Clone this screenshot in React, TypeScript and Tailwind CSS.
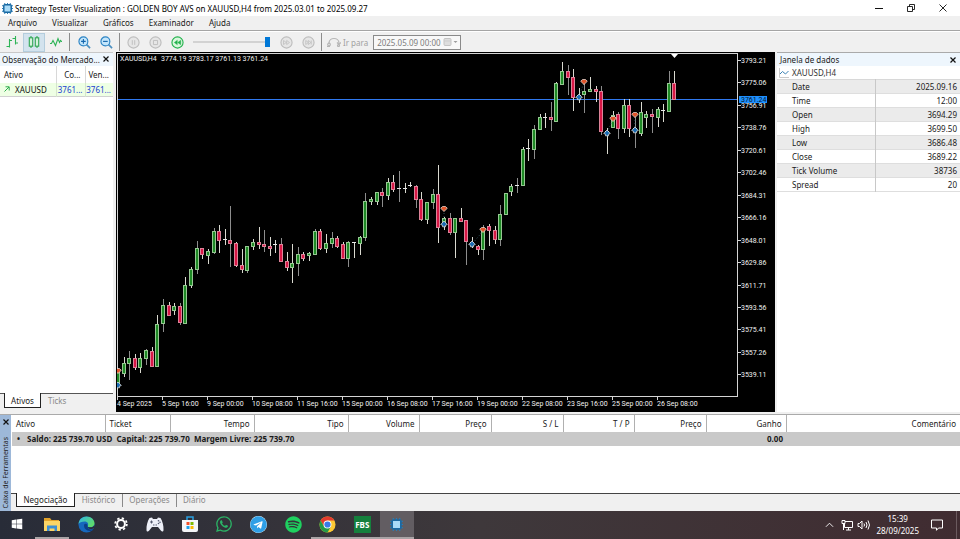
import type { ReactNode } from 'react';
import { FaSpotify, FaTelegram, FaWhatsapp, FaWindows } from 'react-icons/fa';

type Kind = 'up' | 'down' | 'doji';
// high, top of body, bottom of body, low
type Candle = [Kind, number, number, number, number];

const candles: Candle[] = [
  ['up', 370, 372, 385, 386], ['up', 357, 363, 373, 377], ['up', 351, 358, 363, 380],
  ['down', 354, 358, 367, 370], ['up', 353, 358, 367, 373], ['up', 349, 350, 358, 365],
  ['down', 347, 351, 366, 367], ['up', 315, 324, 366, 367], ['up', 299, 305, 323, 332],
  ['down', 302, 305, 315, 316], ['up', 303, 306, 310, 315], ['down', 303, 306, 322, 325],
  ['up', 277, 285, 323, 323], ['up', 267, 269, 285, 288], ['up', 241, 248, 269, 274],
  ['down', 248, 248, 254, 259], ['up', 249, 251, 255, 264], ['up', 228, 231, 252, 254],
  ['down', 225, 231, 240, 253], ['doji', 229, 239, 240, 245], ['down', 206, 240, 243, 267],
  ['down', 242, 243, 265, 267], ['down', 249, 265, 269, 273], ['up', 246, 246, 270, 273],
  ['up', 239, 242, 246, 250], ['down', 227, 242, 244, 249], ['down', 230, 244, 246, 252],
  ['down', 237, 246, 248, 256], ['doji', 240, 244, 245, 253], ['down', 238, 244, 261, 262],
  ['down', 252, 261, 267, 271], ['up', 244, 263, 267, 283], ['up', 247, 254, 263, 276],
  ['down', 252, 254, 258, 261], ['up', 252, 253, 255, 261], ['up', 229, 231, 254, 254],
  ['down', 229, 231, 248, 250], ['up', 234, 243, 248, 253], ['up', 232, 238, 243, 248],
  ['down', 236, 238, 246, 248], ['down', 242, 244, 258, 259], ['up', 241, 242, 258, 267],
  ['doji', 242, 242, 243, 258], ['up', 236, 237, 243, 255], ['up', 193, 201, 237, 241],
  ['up', 197, 199, 201, 205], ['up', 192, 192, 201, 205], ['down', 188, 192, 195, 207],
  ['up', 178, 182, 195, 200], ['down', 175, 182, 189, 192], ['doji', 171, 188, 189, 202],
  ['doji', 183, 188, 189, 193], ['doji', 182, 185, 186, 187], ['down', 185, 186, 199, 208],
  ['down', 192, 199, 219, 221], ['up', 202, 202, 219, 224], ['up', 189, 194, 202, 209],
  ['down', 165, 194, 227, 243], ['up', 217, 218, 222, 230], ['down', 213, 218, 232, 235],
  ['up', 218, 218, 232, 258], ['down', 208, 218, 221, 221], ['down', 220, 220, 241, 265],
  ['doji', 237, 242, 243, 248], ['down', 245, 246, 249, 255], ['up', 225, 228, 249, 260],
  ['down', 224, 226, 230, 246], ['down', 226, 230, 239, 244], ['up', 205, 214, 239, 246],
  ['up', 193, 193, 214, 215], ['up', 184, 186, 191, 196], ['doji', 178, 185, 186, 193],
  ['up', 147, 149, 185, 186], ['doji', 139, 148, 150, 161], ['up', 125, 129, 149, 159],
  ['up', 114, 117, 129, 130], ['doji', 113, 117, 118, 128], ['down', 102, 117, 119, 131],
  ['up', 82, 83, 121, 122], ['up', 62, 71, 84, 84], ['down', 65, 71, 77, 95],
  ['down', 69, 77, 97, 111], ['doji', 88, 95, 96, 103], ['up', 83, 91, 94, 113],
  ['up', 77, 89, 91, 92], ['down', 86, 89, 91, 102], ['down', 86, 91, 131, 135],
  ['doji', 128, 131, 132, 154], ['up', 111, 115, 127, 128], ['down', 112, 114, 128, 139],
  ['up', 99, 105, 128, 133], ['down', 99, 105, 128, 137], ['doji', 113, 128, 129, 148],
  ['up', 102, 112, 133, 136], ['up', 111, 114, 117, 128], ['down', 109, 114, 116, 133],
  ['up', 107, 109, 117, 127], ['doji', 104, 110, 111, 122], ['up', 71, 83, 111, 112],
  ['down', 71, 83, 99, 99],
];

const markers = [
  { index: 0, y: 371, side: 'sell' },
  { index: 0, y: 385, side: 'buy' },
  { index: 58, y: 209, side: 'sell' },
  { index: 58, y: 224, side: 'buy' },
  { index: 63, y: 244, side: 'buy' },
  { index: 65, y: 230, side: 'sell' },
  { index: 82, y: 97, side: 'buy' },
  { index: 83, y: 82, side: 'sell' },
  { index: 87, y: 133, side: 'buy' },
  { index: 88, y: 119, side: 'sell' },
  { index: 92, y: 115, side: 'sell' },
  { index: 92, y: 130, side: 'buy' },
];

const prices = [
  '3793.21', '3775.06', '3756.91', '3738.76', '3720.61', '3702.46', '3684.31', '3666.16',
  '3648.01', '3629.86', '3611.71', '3593.56', '3575.41', '3557.26', '3539.11',
];

const times = [
  '4 Sep 2025', '5 Sep 16:00', '9 Sep 00:00', '10 Sep 08:00', '11 Sep 16:00', '15 Sep 00:00',
  '16 Sep 08:00', '17 Sep 16:00', '19 Sep 00:00', '22 Sep 08:00', '23 Sep 16:00',
  '25 Sep 00:00', '26 Sep 08:00',
];

const dataRows = [
  ['Date', '2025.09.16'],
  ['Time', '12:00'],
  ['Open', '3694.29'],
  ['High', '3699.50'],
  ['Low', '3686.48'],
  ['Close', '3689.22'],
  ['Tick Volume', '38736'],
  ['Spread', '20'],
];

const tradeColumns = [
  { name: 'Ativo', width: 'w-[93px]' },
  { name: 'Ticket', width: 'w-[65px]' },
  { name: 'Tempo', width: 'w-[84px]' },
  { name: 'Tipo', width: 'w-[94px]' },
  { name: 'Volume', width: 'w-[71px]' },
  { name: 'Preço', width: 'w-[72px]' },
  { name: 'S / L', width: 'w-[72px]' },
  { name: 'T / P', width: 'w-[71px]' },
  { name: 'Preço', width: 'w-[72px]' },
  { name: 'Ganho', width: 'w-[80px]' },
  { name: 'Comentário', width: '' },
];

const candleX = (i: number) => 117 + Math.round(i * 5.62);

function AppLogo({ className }: { className?: string }) {
  return (
    <svg viewBox="0 0 16 16" className={className}>
      <path d="M4 0v16M8 0v16M12 0v16M0 4h16M0 8h16M0 12h16" stroke="#2b7db5" strokeWidth="1.4" />
      <rect x="1.500" y="1.500" width="13" height="13" rx="3" fill="#1b6aa3" />
      <rect x="3.700" y="3.700" width="8.600" height="8.600" fill="#a9dbf8" />
    </svg>
  );
}

function CloseIcon() {
  return (
    <svg viewBox="0 0 6 6" className="w-[6px] h-[6px]">
      <path d="M.5.5l5 5M5.500.5l-5 5" stroke="#111" strokeWidth="1.2" />
    </svg>
  );
}

function Chart() {
  return (
    <svg
      viewBox="116 52 659 359"
      preserveAspectRatio="xMinYMin meet"
      className="block w-full h-full font-['Roboto',sans-serif] text-[7px]"
      role="img"
      aria-label="XAUUSD,H4"
    >
      <rect x="117.5" y="53.5" width="620" height="343" fill="none" stroke="#d4d4d4" />
      <path d="M118 99.500H737" stroke="#2f78ee" />
      <path d="M671 54h7l-3.500 4z" fill="#fff" />
      <text x="120" y="61" fill="#f2f2f2">XAUUSD,H4</text>
      <text x="161" y="61" fill="#f2f2f2">3774.19 3783.17 3761.13 3761.24</text>

      {candles.map(([kind, high, top, bottom, low], i) => {
        const x = candleX(i);
        return (
          <g key={i}>
            <path d={`M${x + 1.5} ${high}V${low}`} stroke={i % 3 === 2 ? '#8d8d8d' : '#d9d9d0'} />
            {kind === 'doji' ? (
              <path d={`M${x - 1} ${top + 0.5}h4`} stroke="#e8e8e8" />
            ) : (
              <rect
                x={x - 0.5}
                y={top + 0.5}
                width="3"
                height={Math.max(bottom - top, 2)}
                fill={kind === 'up' ? '#1f8a26' : '#d81846'}
                stroke={kind === 'up' ? '#96c792' : '#dd8399'}
              />
            )}
          </g>
        );
      })}

      <path
        d="M473 243l10-12M579 96l5-13M607 132l6-12M635 130v-14M444 223v-13"
        stroke="#3f7a86"
        strokeWidth="0.7"
        strokeDasharray="1 2"
      />
      {markers.map((m, i) => (
        <path
          key={i}
          transform={`translate(${candleX(m.index) + 1} ${m.y})`}
          d={
            m.side === 'sell'
              ? 'M-1.500-2.500h3l1.800 1.800-3.300 3.200-3.300-3.200z'
              : 'M-1.500 2.800h3v-1.500l1.800-.8-3.300-3.500-3.300 3.500 1.800.8z'
          }
          fill={m.side === 'sell' ? '#e0552b' : '#1b6db3'}
          stroke="#f0ebe4"
          strokeWidth="0.7"
        />
      ))}
      <path d="M116 366h1v23h-1z" fill="#000" />

      {prices.map((p, i) => {
        const y = Math.round(60 + i * 22.45);
        return (
          <g key={p}>
            <path d={`M738 ${y + 0.5}h3`} stroke="#d4d4d4" />
            <text x="741" y={y + 3} fill="#f2f2f2">{p}</text>
          </g>
        );
      })}
      <rect x="739" y="96" width="28" height="7" fill="#1e90ff" />
      <text x="741" y="102" fill="#04152b">3761.24</text>

      {times.map((t, i) => (
        <g key={t}>
          <path d={`M${117.5 + i * 45} 397v3`} stroke="#d4d4d4" />
          <text x={117 + i * 45} y="406" fill="#f2f2f2">{t}</text>
        </g>
      ))}
    </svg>
  );
}

function RoundIcon({ children, active }: { children: ReactNode; active?: boolean }) {
  return (
    <svg
      viewBox="0 0 14 14"
      className={`w-[13px] h-[13px] ${active ? 'text-[#22b14c]' : 'text-[#bdbdbd]'}`}
      fill="none"
      stroke="currentColor"
    >
      <circle cx="7" cy="7" r="6" fill={active ? '#d9f7dd' : '#e6e6e6'} strokeWidth="1.2" />
      {children}
    </svg>
  );
}

function ToolButton({ label, children, on }: { label: string; children: ReactNode; on?: boolean }) {
  return (
    <button
      aria-label={label}
      className={`flex items-center justify-center w-[22px] h-[19px] ${on ? 'bg-[#d3e3ee] outline outline-[#b4cddd] -outline-offset-1' : ''}`}
    >
      {children}
    </button>
  );
}

function ZoomGlyph({ plus }: { plus?: boolean }) {
  return (
    <svg viewBox="0 0 14 14" className="w-[13px] h-[13px]" fill="none">
      <path d="M9 9l4 4" stroke="#4b8fc0" strokeWidth="1.800" />
      <circle cx="5.800" cy="5.800" r="4.800" fill="#c4e6fb" stroke="#2a83c4" strokeWidth="1.200" />
      <path d={plus ? 'M3.300 5.800h5M5.800 3.300v5' : 'M3.300 5.800h5'} stroke="#1566ad" strokeWidth="1.200" />
    </svg>
  );
}

function Toolbar() {
  return (
    <div className="flex items-center h-[20px] shrink-0 pl-[1px] bg-[#f0f0f0] text-[#a0a0a0]">
      <ToolButton label="Barras">
        <svg viewBox="0 0 12 12" className="w-[12px] h-[12px]" fill="none" stroke="#2fb457" strokeWidth="1.100">
          <path d="M3.500 3v8.500M3.500 4.500h2.500M.5 10.500h3M9.500 0v8.500M6.500 2.500h3M9.500 7h2.500" />
        </svg>
      </ToolButton>
      <ToolButton label="Velas" on>
        <svg viewBox="0 0 12 12" className="w-[12px] h-[12px]" fill="#d5f2dc" stroke="#2fa653" strokeWidth="1.100">
          <path d="M3 0v12M9 0v12" />
          <rect x="1.300" y="1.800" width="3.400" height="8.400" />
          <rect x="7.300" y="1.800" width="3.400" height="8.400" />
        </svg>
      </ToolButton>
      <ToolButton label="Linha">
        <svg viewBox="0 0 12 12" className="w-[12px] h-[12px]" fill="none" stroke="#2fb457" strokeWidth="1.100">
          <path d="M0 7.500h1.500l1.500-3 2.500 5 2.500-7 1.500 4 1-2 1 1h.5" />
        </svg>
      </ToolButton>
      <div className="w-px h-[18px] ml-[2px] mr-[3px] bg-[#8c8c8c]" />
      <ToolButton label="Aumentar zoom">
        <ZoomGlyph plus />
      </ToolButton>
      <ToolButton label="Diminuir zoom">
        <ZoomGlyph />
      </ToolButton>
      <div className="w-px h-[18px] mx-[2px] bg-[#8c8c8c]" />
      <ToolButton label="Pausar">
        <RoundIcon><path d="M5.700 4.500v5M8.300 4.500v5" /></RoundIcon>
      </ToolButton>
      <ToolButton label="Parar">
        <RoundIcon><path d="M4.800 4.800h4.400v4.400H4.800z" /></RoundIcon>
      </ToolButton>
      <ToolButton label="Mais lento">
        <RoundIcon active>
          <path d="M6.800 4.500v5L3.500 7zM10.500 4.500v5L7.200 7z" fill="currentColor" strokeWidth=".4" />
        </RoundIcon>
      </ToolButton>
      <input
        type="range"
        aria-label="Velocidade"
        defaultValue={100}
        className="w-[77px] h-[12px] mx-[5px] appearance-none bg-transparent [&::-webkit-slider-runnable-track]:h-[2px] [&::-webkit-slider-runnable-track]:bg-[#d2d2d2] [&::-webkit-slider-thumb]:appearance-none [&::-webkit-slider-thumb]:w-[5px] [&::-webkit-slider-thumb]:h-[10px] [&::-webkit-slider-thumb]:-mt-[4px] [&::-webkit-slider-thumb]:bg-[#0078d7]"
      />
      <ToolButton label="Mais rápido">
        <RoundIcon><path d="M3.800 4.800v4.400L6.800 7zM7.200 4.800v4.400l3-2.200z" strokeWidth=".8" /></RoundIcon>
      </ToolButton>
      <ToolButton label="Ir ao fim">
        <RoundIcon><path d="M4 4.800v4.400L6.800 7zM6.800 4.800v4.400L9.600 7zM10 4.800v4.400" strokeWidth=".8" /></RoundIcon>
      </ToolButton>
      <div className="w-px h-[18px] ml-[2px] mr-[5px] bg-[#8c8c8c]" />
      <button className="flex items-center gap-[2px]">
        <svg viewBox="0 0 14 10" className="w-[14px] h-[10px]" fill="none" stroke="#b5b5b5" strokeWidth="1.200">
          <path d="M2 6C2 0 12 0 12 6" />
          <path d="M0 9.500h3M10 5.500l2 2 2-2" />
          <circle cx="2" cy="7.500" r="1.300" />
          <circle cx="11.500" cy="8.500" r="1" />
        </svg>
        Ir para
      </button>
      <div className="flex items-center w-[88px] h-[15px] ml-[5px] pl-[3px] border border-[#8a8a8a] bg-[#f8f8f8]">
        <input
          aria-label="Ir para"
          defaultValue="2025.05.09 00:00"
          className="w-[66px] bg-transparent text-[#7d7d7d] outline-none"
        />
        <svg viewBox="0 0 16 8" className="w-[16px] h-[8px]" fill="none">
          <rect x="1" y=".5" width="7" height="7" rx="1" fill="#dedede" stroke="#c4c4c4" />
          <path d="M1 3h7" stroke="#cdcdcd" />
          <path d="M10.500 3h4l-2 2z" fill="#9c9c9c" />
        </svg>
      </div>
    </div>
  );
}

function MarketWatch() {
  return (
    <aside className="flex flex-col w-[113px] shrink-0 bg-[#f0f0f0]">
      <div className="flex items-center justify-between h-[14px] pl-[2px] pr-[4px] pb-[1px] bg-[#eef6fd] border-t border-[#c8c8c8]">
        <span>Observação do Mercado...</span>
        <button aria-label="Fechar"><CloseIcon /></button>
      </div>
      <div className="flex-1 bg-white border-b border-[#555]">
        <table className="w-full table-fixed border-b border-[#d0d0d0]">
          <thead>
            <tr className="h-[17px] text-right">
              <th className="w-[56px] pl-[4px] text-left font-normal border-r border-[#d8d8d8]">Ativo</th>
              <th className="w-[29px] pr-[4px] font-normal border-r border-[#d8d8d8]">Co...</th>
              <th className="pr-[4px] font-normal">Ven...</th>
            </tr>
          </thead>
          <tbody>
            <tr className="h-[13px] bg-[#eeffe4] text-right text-[#1a3fd0]">
              <td className="pl-[4px] border-r border-[#d5e5cc] text-[#111]">
                <div className="flex items-center gap-[5px]">
                  <svg viewBox="0 0 6 6" className="w-[6px] h-[6px]" fill="none" stroke="#2bab4b">
                    <path d="M.5 5.500l4.500-4.500M1.500.8h3.700v3.700" />
                  </svg>
                  XAUUSD
                </div>
              </td>
              <td className="pr-[2px] border-r border-[#d5e5cc]">3761...</td>
              <td className="pr-[2px]">3761...</td>
            </tr>
          </tbody>
        </table>
      </div>
      <div className="flex h-[18px] pl-[4px] pb-[4px]">
        <button className="w-[37px] -mt-px bg-white border-x border-b border-[#222]">Ativos</button>
        <button className="px-[7px] pb-[2px] text-[#8a8a8a]">Ticks</button>
      </div>
    </aside>
  );
}

function DataWindow() {
  return (
    <aside className="w-[183px] shrink-0 bg-white border-t border-[#aaa]">
      <div className="flex items-center justify-between h-[13px] pl-[3px] pr-[4px] bg-[#eef6fd]">
        <span>Janela de dados</span>
        <button aria-label="Fechar"><CloseIcon /></button>
      </div>
      <div className="flex items-center h-[13px] pl-[2px] gap-[3px] text-[#333]">
        <svg viewBox="0 0 10 10" className="w-[10px] h-[10px]" fill="none">
          <path d="M.5 0v9.500H10" stroke="#c9c9c9" />
          <path d="M1 6l2.500-2.500 3 2.500L9.500 3" stroke="#3b82b5" />
        </svg>
        XAUUSD,H4
      </div>
      <table className="w-full border-t border-[#d8d8d8]">
        <tbody>
          {dataRows.map(([name, value]) => (
            <tr key={name} className="h-[14px] odd:bg-[#ebebeb] border-b border-[#dedede]">
              <th className="w-[98px] pl-[15px] text-left font-normal border-r border-[#c8c8c8]">{name}</th>
              <td className="pr-[3px] text-right">{value}</td>
            </tr>
          ))}
        </tbody>
      </table>
    </aside>
  );
}

function Toolbox() {
  return (
    <section className="flex shrink-0 mt-[2px] border-t border-[#aaa]">
      <div className="flex flex-col items-center justify-between w-[11px] pt-[4px] pb-[3px] bg-[#9db8d9]">
        <button aria-label="Fechar" className="flex"><CloseIcon /></button>
        <span className="[writing-mode:vertical-rl] rotate-180 text-[7px] leading-[10px] text-[#222]">Caixa de Ferramentas</span>
      </div>
      <div className="flex-1 pl-[1px] bg-white">
        <table className="w-full table-fixed">
          <thead>
            <tr className="h-[17px]">
              {tradeColumns.map((col, i) => (
                <th
                  key={i}
                  className={`${col.width} px-[4px] pb-[1px] font-normal border-r border-[#b0b0b0] last:border-r-0 ${i < 2 ? 'text-left' : 'text-right'}`}
                >
                  {col.name}
                </th>
              ))}
            </tr>
          </thead>
          <tbody>
            <tr className="h-[14px] bg-[#c9c9c9] font-bold">
              <td colSpan={9} className="pl-[5px] pb-[2px]">
                <div className="flex gap-[7px]">
                  <span>•</span>
                  <span className="whitespace-pre">Saldo: 225 739.70 USD  Capital: 225 739.70  Margem Livre: 225 739.70</span>
                </div>
              </td>
              <td className="pr-[3px] pb-[2px] text-right">0.00</td>
              <td />
            </tr>
          </tbody>
        </table>
        <div className="h-[47px]" />
        <div className="flex h-[18px] -ml-[1px] pl-[5px] pb-[4px] bg-[#f0f0f0] border-t border-[#444]">
          <button className="w-[59px] -mt-px bg-white border-x border-b border-[#222]">Negociação</button>
          <button className="w-[48px] pb-[2px] text-[#8a8a8a] border-r border-[#8a8a8a]">Histórico</button>
          <button className="w-[54px] pb-[2px] text-[#8a8a8a] border-r border-[#8a8a8a]">Operações</button>
          <button className="px-[6px] pb-[2px] text-[#8a8a8a]">Diário</button>
        </div>
      </div>
    </section>
  );
}

function TaskButton({ label, running, active, children }: { label: string; running?: boolean; active?: boolean; children: ReactNode }) {
  return (
    <button
      aria-label={label}
      className={`flex items-center justify-center border-b-2 ${running ? 'border-[#a9a4a6]' : 'border-transparent'} ${active ? 'bg-[#625d62]' : ''}`}
    >
      {children}
    </button>
  );
}

function Taskbar() {
  return (
    <footer className="flex justify-between h-[28px] shrink-0 bg-linear-to-r from-[#282c38] via-[#3e383b] to-[#402c31] text-white">
      <div className="grid grid-cols-12 w-[414px]">
        <TaskButton label="Iniciar"><FaWindows className="w-[12px] h-[12px]" /></TaskButton>
        <TaskButton label="Explorador" running>
          <svg viewBox="0 0 16 14" className="w-[16px] h-[14px]">
            <path d="M0 1h6l1.500 2H15v3H0z" fill="#e3a32a" />
            <path d="M0 4h16v10H0z" fill="#fbd566" />
            <path d="M3 14V8.500h10V14h-2.500v-2.500h-5V14z" fill="#3c8fd4" />
          </svg>
        </TaskButton>
        <TaskButton label="Edge">
          <svg viewBox="0 0 18 18" className="w-[17px] h-[17px]">
            <defs>
              <linearGradient id="edge-top" x1="0" y1="0" x2="1" y2="0.600">
                <stop offset="0" stopColor="#2fb4e8" />
                <stop offset="1" stopColor="#5fdc6a" />
              </linearGradient>
            </defs>
            <circle cx="9" cy="9" r="8.500" fill="#1668bd" />
            <path d="M.5 8.500C1 3.500 4.500.5 9 .5c5 0 8.500 3.500 8.500 7.300 0 2.700-2 4.200-4.500 4.200-2 0-3-.8-2.500-1.800C11.500 7.500 9.500 5.800 7 5.800 4 5.800 1.300 6.800.5 8.500z" fill="url(#edge-top)" />
            <path d="M6.500 9c-.8 4 2.500 7 6.500 6.800 1.500 0 2.700-.8 3.500-1.800-2 1-6.500.8-6.500-4 0-2-2.700-2.500-3.500-1z" fill="#0c3f86" />
            <path d="M10.500 10.200c-.5 1 .5 1.800 2.500 1.800 1.700 0 3.300-.7 4-2l.3 2.500-2.800 1.500C12 14 10 12.500 10.500 10.200z" fill="#2a2e3a" />
          </svg>
        </TaskButton>
        <TaskButton label="Configurações">
          <svg viewBox="0 0 14 14" className="w-[14px] h-[14px]" fill="none" stroke="#fff">
            <circle cx="7" cy="7" r="5.800" strokeWidth="1.800" strokeDasharray="2.280 2.280" />
            <circle cx="7" cy="7" r="3.900" strokeWidth="2" />
          </svg>
        </TaskButton>
        <TaskButton label="Jogos">
          <svg viewBox="0 0 18 15" className="w-[18px] h-[15px]">
            <path d="M3.500 1L6 .5 7 2h4l1-1.500 2.500.5C16.500 4 17.800 9 17.500 13c0 2-1.700 2-2.500.8L12 10H6l-3 3.800C2.200 15 .5 15 .5 13 .2 9 1.500 4 3.500 1z" fill="#eef0f8" />
            <path d="M4 5h3M5.500 3.500v3M7 8h1.500M9.500 8H11" stroke="#555a70" />
            <circle cx="12.500" cy="3.800" r=".8" fill="#555a70" />
            <circle cx="12.500" cy="6.500" r=".8" fill="#555a70" />
            <circle cx="14" cy="5.200" r=".8" fill="#555a70" />
          </svg>
        </TaskButton>
        <TaskButton label="Microsoft Store">
          <svg viewBox="0 0 16 16" className="w-[16px] h-[16px]">
            <path d="M5 4V1h6v3" fill="none" stroke="#2a9fe0" strokeWidth="1.500" />
            <path d="M0 4h16v10a2 2 0 01-2 2H2a2 2 0 01-2-2z" fill="#f4f6f8" />
            <path d="M4.500 6h3v3h-3z" fill="#f0502a" />
            <path d="M8.500 6h3v3h-3z" fill="#7fba00" />
            <path d="M4.500 10h3v3h-3z" fill="#1ba0ea" />
            <path d="M8.500 10h3v3h-3z" fill="#fdb900" />
          </svg>
        </TaskButton>
        <TaskButton label="WhatsApp"><FaWhatsapp className="w-[18px] h-[18px] text-[#2bb466]" /></TaskButton>
        <TaskButton label="Telegram">
          <span className="rounded-full bg-white"><FaTelegram className="w-[17px] h-[17px] text-[#2f9fe6]" /></span>
        </TaskButton>
        <TaskButton label="Spotify"><FaSpotify className="w-[17px] h-[17px] text-[#1ed05f]" /></TaskButton>
        <TaskButton label="Chrome" running>
          <svg viewBox="0 0 18 18" className="w-[17px] h-[17px]">
            <circle cx="9" cy="9" r="8.500" fill="#fcc934" />
            <path d="M1.640 4.750A8.500 8.500 0 0116.360 4.750H9L5.320 11.120z" fill="#e33b2e" />
            <path d="M1.640 4.750a8.500 8.500 0 007.360 12.750L12.680 11.120 9 9 5.320 11.120z" fill="#249a48" />
            <circle cx="9" cy="9" r="4.200" fill="#fff" />
            <circle cx="9" cy="9" r="3.300" fill="#3a7be8" />
          </svg>
        </TaskButton>
        <TaskButton label="FBS" running>
          <span className="w-[17px] h-[17px] bg-[#15803d] leading-[17px] font-bold">FBS</span>
        </TaskButton>
        <TaskButton label="Strategy Tester" running active><AppLogo className="w-[13px] h-[13px]" /></TaskButton>
      </div>
      <div className="flex items-center pr-[3px]">
        <svg viewBox="0 0 10 6" className="w-[9px] h-[6px] mr-[7px]" fill="none" stroke="#fff">
          <path d="M1 5l4-4 4 4" />
        </svg>
        <svg viewBox="0 0 12 12" className="w-[12px] h-[12px] mr-[4px]" fill="none" stroke="#fff">
          <path d="M4 2.500h7.500v6H3.500V5M7.500 8.500v2.500M5 11h5M1 1.500h3v3H1zM2.500 4.500V11" />
        </svg>
        <svg viewBox="0 0 13 12" className="w-[13px] h-[12px] mr-[6px]" fill="none" stroke="#fff">
          <path d="M1 4.500h1.500L5 2v8L2.500 7.500H1zM7 4.500q1 1.500 0 3M9 3q2 3 0 6M11 1.500q3 4.500 0 9" />
        </svg>
        <div className="text-center leading-[12px] mr-[12px]">
          <div>15:39</div>
          <div>28/09/2025</div>
        </div>
        <svg viewBox="0 0 12 12" className="w-[12px] h-[12px] mr-[13px]" fill="none" stroke="#fff">
          <path d="M.5 1h11v8H7.500L5.500 11.300V9h-5z" />
        </svg>
        <div className="w-px h-full bg-[#6b5a5e]" />
      </div>
    </footer>
  );
}

export default function App() {
  return (
    <div className="flex flex-col h-screen overflow-hidden bg-[#f0f0f0] font-['Noto_Sans','Open_Sans',sans-serif] text-[8px] leading-[11px] text-[#1a1a1a]">
      <header className="flex items-center h-[16px] shrink-0 pl-[2px] bg-white text-black">
        <AppLogo className="w-[11px] h-[11px] mr-[2px]" />
        <h1 className="flex-1">Strategy Tester Visualization : GOLDEN BOY AVS on XAUUSD,H4 from 2025.03.01 to 2025.09.27</h1>
        <div className="flex gap-[24px] pr-[13px]">
          <button aria-label="Minimizar">
            <svg viewBox="0 0 8 8" className="w-[8px] h-[8px]"><path d="M0 4.500h8" stroke="#111" /></svg>
          </button>
          <button aria-label="Restaurar">
            <svg viewBox="0 0 8 8" className="w-[8px] h-[8px]" fill="none" stroke="#111" strokeWidth=".9">
              <path d="M.5 2.500h5v5h-5zM2.500 2.500v-2h5v5h-2" />
            </svg>
          </button>
          <button aria-label="Fechar janela">
            <svg viewBox="0 0 8 8" className="w-[8px] h-[8px]"><path d="M.5.5l7 7M7.500.5l-7 7" stroke="#111" strokeWidth=".9" /></svg>
          </button>
        </div>
      </header>

      <nav className="flex items-center h-[15px] shrink-0 pl-[8px] pb-[1px] gap-[15px] border-b border-[#a5a5a5]">
        <button>Arquivo</button>
        <button>Visualizar</button>
        <button>Gráficos</button>
        <button>Examinador</button>
        <button>Ajuda</button>
      </nav>
      <div className="h-px shrink-0 bg-white" />

      <Toolbar />

      <main className="flex flex-1 min-h-0">
        <MarketWatch />
        <div className="flex-1 min-w-0 ml-[3px] mr-[2px] bg-black">
          <Chart />
        </div>
        <DataWindow />
      </main>

      <Toolbox />
      <Taskbar />
    </div>
  );
}
